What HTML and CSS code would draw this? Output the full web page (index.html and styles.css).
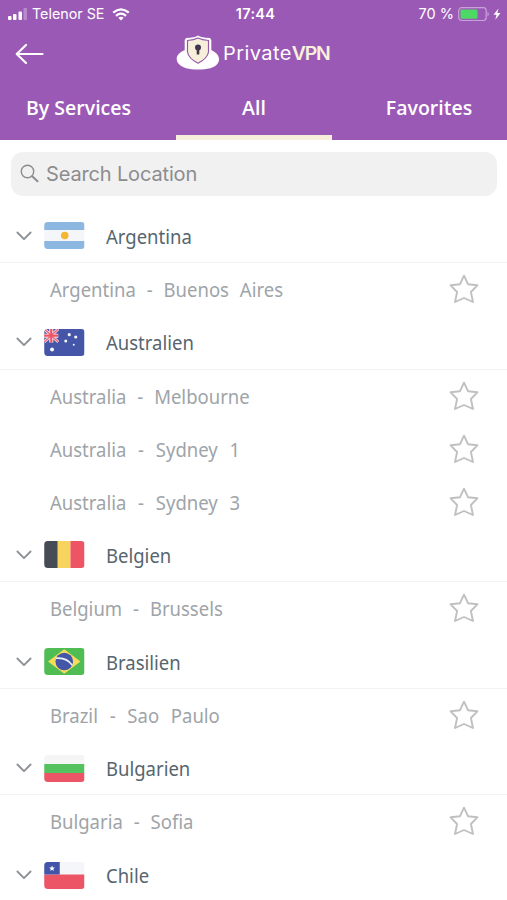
FILE: index.html
```html
<!DOCTYPE html>
<html lang="en">
<head>
<meta charset="utf-8">
<title>PrivateVPN</title>
<link rel="stylesheet" href="styles.css">
</head>
<body>
<svg class="defs" width="0" height="0" aria-hidden="true">
  <symbol id="chevron" viewBox="0 0 16 10"><path d="M1.400 1.500 8 8.200l6.600-6.700" fill="none" stroke="#8b9095" stroke-width="1.800" stroke-linecap="round" stroke-linejoin="round"/></symbol>
  <symbol id="star" viewBox="0 0 30 30"><path d="M15 1.700 19 10.200 28.400 11.300 21.900 18 24 28 15 24 6 28 8.100 18 1.600 11.300 11 10.200Z" fill="none" stroke="#bfc0c1" stroke-width="1.900" stroke-linejoin="round"/></symbol>
</svg>
<header class="top">
  <div class="status">
    <div class="carrier">
      <svg width="20" height="12" viewBox="0 0 20 12" fill="#fff"><rect y="8" width="3.500" height="4" rx="1"/><rect x="5" y="6" width="3.500" height="6" rx="1"/><rect x="10.500" y="3.500" width="3.500" height="8.500" rx="1"/><rect x="15.500" y="0" width="3.500" height="12" rx="1" opacity=".3"/></svg>
      <span class="telco">Telenor SE</span>
      <svg class="wifi" width="18" height="13" viewBox="0 0 18 13" fill="none" stroke="#fff" stroke-width="2.300"><path d="M1.200 4.700Q9-2 16.800 4.700M4 7.800Q9 3.500 14 7.800"/><path d="M6.300 9.800Q9 7.500 11.700 9.800L9 12.600Z" fill="#fff" stroke="none"/></svg>
    </div>
    <span class="clock">17:44</span>
    <div class="power">
      <span>70 %</span>
      <svg width="44" height="16" viewBox="0 0 44 16"><rect x=".7" y="1.700" width="27.500" height="12.800" rx="3" fill="none" stroke="#c9a2db" stroke-width="1.200"/><rect x="2.500" y="3.500" width="17" height="9.200" rx="1" fill="#4cd964"/><path d="M29.500 5.800q2.600 2.200 0 4.600Z" fill="#c9a2db"/><path d="M40.500 2.500 35.500 8.800h3l-1.200 5 5.200-6.700h-3.200Z" fill="#fff"/></svg>
    </div>
  </div>
  <div class="brandbar">
    <svg class="back" width="30" height="24" viewBox="0 0 30 24" fill="none" stroke="#fff" stroke-width="2.200" stroke-linecap="round" stroke-linejoin="round"><path d="M11 3 1.700 12 11 21M2 12h25.500"/></svg>
    <div class="brand">
      <svg width="44" height="36" viewBox="0 0 44 36"><path d="M9 15C-1 19 0 25 2 28c4 5 11 6.500 20 6.500S39 33 42 28c2-3 2-9-7-13Z" fill="#fff"/><path d="M22 .5q3 2 12 2.500l1.300 2V17q-1 8-13.300 13Q10 25 8.700 17V5L10 3Q19 2.500 22 .5Z" fill="#fff"/><path d="M22 3q4 2 10.500 2.500V17q-1 6.500-10.500 11.200Q12.500 23.500 11.500 17V5.500Q18 5 22 3Z" fill="#f7efd9" stroke="#9659ab" stroke-width="1.200"/><circle cx="22" cy="12.500" r="3" fill="#41364e"/><path d="M20.700 14h2.600v5.500h-2.600Z" fill="#41364e"/></svg>
      <span class="word">Private<b>VPN</b></span>
    </div>
  </div>
  <nav class="tabs"><a>By Services</a><a class="on">All</a><a>Favorites</a></nav>
</header>
<main>
  <div class="search">
    <svg width="20" height="20" viewBox="0 0 20 20" fill="none" stroke="#8c8c8f"><circle cx="7.500" cy="7.500" r="6.200" stroke-width="1.400"/><path d="m12.200 12.200 5.300 5" stroke-width="2" stroke-linecap="round"/></svg>
    <span>Search Location</span>
  </div>
  <div class="country"><svg class="chev"><use href="#chevron"/></svg>
    <svg class="flag" viewBox="0 0 40 27"><path fill="#f4f6fa" d="M0 0h40v27H0z"/><path fill="#8cb7e0" d="M0 0h40v8H0zM0 19h40v8H0z"/><circle cx="20.500" cy="13.500" r="3.800" fill="#f7b62f"/></svg><span>Argentina</span></div>
  <div class="city"><span>Argentina - Buenos Aires</span><svg class="star"><use href="#star"/></svg></div>
  <div class="country"><svg class="chev"><use href="#chevron"/></svg>
    <svg class="flag" viewBox="0 0 40 27"><path fill="#4555a8" d="M0 0h40v27H0z"/><path d="m0 0 14 13M14 0 0 13" stroke="#f7dce6" stroke-width="3"/><path d="M7 0v13.500M0 6.700h14" stroke="#f9e6ec" stroke-width="4"/><path d="m0 0 14 13M14 0 0 13" stroke="#ed6b80" stroke-width="1.500"/><path d="M7 0v13.500M0 6.700h14" stroke="#ed5565" stroke-width="2.200"/><g fill="#f5f6fb"><circle cx="7.800" cy="20.500" r="2"/><circle cx="21.500" cy="12" r="1.500"/><circle cx="25" cy="5.700" r="1.600"/><circle cx="31.500" cy="8" r="1.600"/><circle cx="29.500" cy="15.800" r="1"/></g></svg><span>Australien</span></div>
  <div class="city"><span>Australia - Melbourne</span><svg class="star"><use href="#star"/></svg></div>
  <div class="city wide"><span>Australia - Sydney 1</span><svg class="star"><use href="#star"/></svg></div>
  <div class="city wide"><span>Australia - Sydney 3</span><svg class="star"><use href="#star"/></svg></div>
  <div class="country"><svg class="chev"><use href="#chevron"/></svg>
    <svg class="flag" viewBox="0 0 40 27"><path fill="#454c56" d="M0 0h13.500v27H0z"/><path fill="#f8d45c" d="M13.500 0h12.700v27H13.500z"/><path fill="#ee5564" d="M26.200 0H40v27H26.200z"/></svg><span>Belgien</span></div>
  <div class="city"><span>Belgium - Brussels</span><svg class="star"><use href="#star"/></svg></div>
  <div class="country"><svg class="chev"><use href="#chevron"/></svg>
    <svg class="flag" viewBox="0 0 40 27"><path fill="#50bc54" d="M0 0h40v27H0z"/><path fill="#f9db5c" d="M20 1.200 36.200 13.500 20 25.800 3.800 13.500Z"/><circle cx="20" cy="13.500" r="8.800" fill="#4456a8"/><path d="M11.700 10.300Q22 9 28 17.200" fill="none" stroke="#eef1fa" stroke-width="1.600"/></svg><span>Brasilien</span></div>
  <div class="city wide"><span>Brazil - Sao Paulo</span><svg class="star"><use href="#star"/></svg></div>
  <div class="country"><svg class="chev"><use href="#chevron"/></svg>
    <svg class="flag" viewBox="0 0 40 27"><path fill="#f5f5f5" d="M0 0h40v9H0z"/><path fill="#53c25f" d="M0 9h40v9H0z"/><path fill="#eb5565" d="M0 18h40v9H0z"/></svg><span>Bulgarien</span></div>
  <div class="city"><span>Bulgaria - Sofia</span><svg class="star"><use href="#star"/></svg></div>
  <div class="country last"><svg class="chev"><use href="#chevron"/></svg>
    <svg class="flag" viewBox="0 0 40 27"><path fill="#f4f6f9" d="M0 0h40v12.500H0z"/><path fill="#eb5565" d="M0 12.500h40V27H0z"/><path fill="#4355a8" d="M0 0h15.500v12.500H0z"/><path fill="#fff" d="m7.800 3.500.8 2h2.100l-1.600 1.400.5 2.100-1.800-1.200L6 9l.5-2.100-1.600-1.400H7Z"/></svg><span>Chile</span></div>
</main>
</body>
</html>
```
FILE: styles.css
```css
* { box-sizing: border-box; }
body {
  margin: 0;
  height: 900px;
  overflow: hidden;
  background: #fff;
  font-family: "Noto Sans", "Open Sans", sans-serif;
}
svg { display: block; flex: none; }
.defs { height: 0; }
.top { height: 140px; background: #9b59b6; color: #fff; }
.status {
  display: grid;
  grid-template-columns: 1fr auto 1fr;
  align-items: center;
  height: 28px;
  padding: 0 5px 0 8px;
  font: 14.500px/28px Inter, sans-serif;
}
.carrier, .power { display: flex; align-items: center; }
.telco { margin-left: 4px; font-size: 14.300px; }
.wifi { margin-left: 8px; }
.clock { padding-left: 1px; font-weight: 600; font-size: 14.500px; letter-spacing: .3px; }
.power { justify-content: flex-end; gap: 4px; }
.brandbar { display: flex; align-items: center; height: 50px; padding-left: 15px; }
.back { margin-top: 2px; }
.brand { display: flex; align-items: center; margin-left: 131px; gap: 3px; }
.word {
  font: 400 18.500px/36px Inter, sans-serif;
  letter-spacing: .4px;
  white-space: nowrap;
  transform: scaleX(1.08);
  transform-origin: left center;
}
.word b { color: #f8f0da; font-size: 18px; font-weight: 600; letter-spacing: -1.200px; }
.tabs { display: grid; grid-template-columns: 176px 156px 1fr; height: 62px; }
.tabs a {
  padding: 15.500px 0 0;
  text-align: center;
  font: 600 19.500px/28px "Open Sans", sans-serif;
}
.tabs a:first-child { padding-right: 19px; }
.tabs a:last-child { padding-left: 19px; }
.tabs .on { border-bottom: 5px solid #f7eedb; }
.search {
  display: flex;
  align-items: center;
  gap: 6px;
  height: 44px;
  margin: 12px 10px 13.500px 11px;
  padding-left: 9px;
  border-radius: 12px;
  background: #f1f1f1;
  color: #8c8c8f;
  font: 20px/44px Inter, sans-serif;
  letter-spacing: -.15px;
}
.country {
  display: flex;
  align-items: center;
  height: 53.600px;
  padding-left: 16px;
  border-bottom: 1.500px solid #f3f3f4;
  color: #56656e;
  font-size: 20px;
}
.country span, .city span {
  transform: scaleX(.925);
  transform-origin: left center;
  white-space: nowrap;
}
.country span { padding-top: 1px; }
.last { border: 0; }
.chev { width: 16px; height: 10px; }
.flag { width: 40.500px; height: 27px; margin: 0 21.500px 0 12px; border-radius: 4px; }
.city {
  display: flex;
  align-items: center;
  justify-content: space-between;
  height: 53px;
  padding: 0 28px 0 50px;
  color: #9ea4a8;
  font-size: 20px;
  word-spacing: 6.600px;
}
.wide { word-spacing: 7.500px; }
.star { width: 30px; height: 30px; margin-top: -1px; }
```
